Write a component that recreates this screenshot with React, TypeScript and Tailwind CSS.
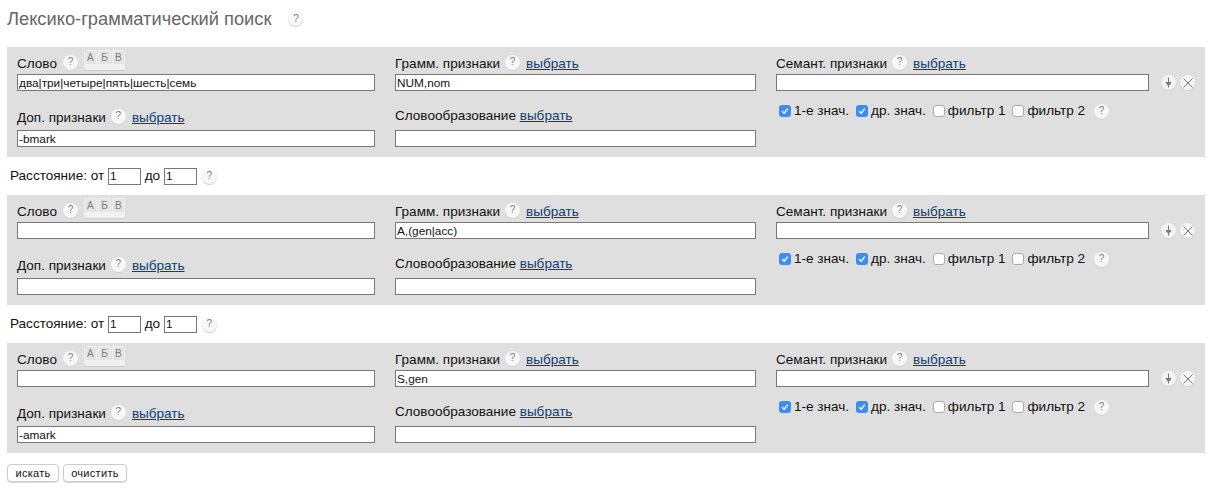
import React from 'react';

const Help = ({ className = '' }: { className?: string }) => (
  <span className={`inline-flex h-[15px] w-[15px] shrink-0 items-center justify-center rounded-full bg-[#f7f7f7] text-[10px] leading-none text-[#808080] shadow-[0_1px_1px_#d0d0d0] ${className}`}>
    ?
  </span>
);

const Pick = () => <a href="#" className="text-[#0b3f78] underline">выбрать</a>;

const Field = ({ value = '', className = '' }: { value?: string; className?: string }) => (
  <input
    readOnly
    value={value}
    className={`block h-[17px] border border-[#777] bg-white px-[1px] text-[11.8px] leading-none text-[#111] outline-none ${className}`}
  />
);

const Abc = () => (
  <span className="ml-[6px] flex h-[20px] w-[41px] -translate-y-[4px] flex-col items-stretch">
    <span className="flex h-[14px] gap-[1px]">
      {['А', 'Б', 'В'].map(l => (
        <span key={l} className="flex h-[14px] w-[13px] items-center justify-center rounded-t-[2px] border-x border-t border-[#f0f0f0] bg-[#e4e4e4] text-[10px] leading-none text-[#7d7d7d]">
          {l}
        </span>
      ))}
    </span>
    <span className="h-[6px] rounded-[2px] bg-[#f1f1f1] shadow-[0_1px_0_#cfcfcf]" />
  </span>
);

const Check = ({ on, label, className = '' }: { on?: boolean; label: string; className?: string }) => (
  <span className={`flex items-center ${className}`}>
    {on ? (
      <span className="mr-[3px] flex h-[12px] w-[12px] items-center justify-center rounded-[3px] bg-[#3b8df0]">
        <svg width="8" height="8" viewBox="0 0 8 8" fill="none" stroke="white" strokeWidth="1.5">
          <path d="M1.2 4.2 3.2 6.2 6.8 1.6" />
        </svg>
      </span>
    ) : (
      <span className="mr-[3px] h-[12px] w-[12px] rounded-[3px] border border-[#aaa] bg-white" />
    )}
    {label}
  </span>
);

const RoundBtn = ({ children }: { children: React.ReactNode }) => (
  <span className="flex h-[15px] w-[15px] items-center justify-center rounded-full bg-[#f3f3f3] shadow-[0_1px_1px_#d0d0d0]">
    {children}
  </span>
);

const Panel = ({ word = '', gram = '', extra = '' }: { word?: string; gram?: string; extra?: string }) => (
  <div className="mx-[7px] flex h-[110px] w-[1198px] bg-[#dfdfdf] pl-[10px] pt-[7px] text-[13.55px] text-[#111]">
    <div className="w-[358px]">
      <div className="flex h-[20px] items-center">
        <span>Слово</span>
        <Help className="ml-[6px] -translate-y-[2px]" />
        <Abc />
      </div>
      <Field value={word} className="w-[358px]" />
      <div className="mt-[17px] flex h-[20px] items-center">
        <span>Доп. признаки</span>
        <Help className="ml-[5px] -translate-y-[2px]" />
        <span className="ml-[6px]"><Pick /></span>
      </div>
      <Field value={extra} className="mt-[2px] w-[358px]" />
    </div>
    <div className="ml-[20px] w-[361px]">
      <div className="flex h-[20px] items-center">
        <span>Грамм. признаки</span>
        <Help className="ml-[5px] -translate-y-[2px]" />
        <span className="ml-[6px]"><Pick /></span>
      </div>
      <Field value={gram} className="w-[361px]" />
      <div className="mt-[16px] flex h-[19px] items-center">
        <span>Словообразование&nbsp;</span>
        <Pick />
      </div>
      <Field className="mt-[4px] w-[361px]" />
    </div>
    <div className="ml-[20px] w-[420px]">
      <div className="flex h-[20px] items-center">
        <span>Семант. признаки</span>
        <Help className="ml-[5px] -translate-y-[2px]" />
        <span className="ml-[6px]"><Pick /></span>
      </div>
      <div className="flex items-center">
        <Field className="w-[373px]" />
        <span className="ml-[12px] flex gap-[4px]">
          <RoundBtn>
            <svg width="9" height="11" viewBox="0 0 9 11" fill="none" stroke="#777" strokeWidth="1">
              <path d="M4.5 0.5V10.5" />
              <path d="M2 5.5H7L4.5 8.5Z" fill="#777" />
            </svg>
          </RoundBtn>
          <RoundBtn>
            <svg width="10" height="10" viewBox="0 0 10 10" fill="none" stroke="#777" strokeWidth="1">
              <path d="M0.5 0.5 9.5 9.5M9.5 0.5 0.5 9.5" />
            </svg>
          </RoundBtn>
        </span>
      </div>
      <div className="mt-[12px] flex h-[16px] items-center pl-[3px]">
        <Check on label="1-е знач." />
        <Check on label="др. знач." className="ml-[7px]" />
        <Check label="фильтр 1" className="ml-[7px]" />
        <Check label="фильтр 2" className="ml-[7px]" />
        <Help className="ml-[9px]" />
      </div>
    </div>
  </div>
);

const Distance = () => (
  <div className="flex h-[38px] items-center pl-[10px] text-[13.55px] text-[#111]">
    <span>Расстояние: от&nbsp;</span>
    <Field value="1" className="w-[33px]" />
    <span>&nbsp;до&nbsp;</span>
    <Field value="1" className="w-[33px]" />
    <Help className="ml-[5px]" />
  </div>
);

export default function App() {
  return (
    <div className="h-[492px] w-[1216px] overflow-hidden bg-white font-['Liberation_Sans',sans-serif]">
      <div className="flex h-[47px] items-start pl-[7px] pt-[9px]">
        <h1 className="text-[18.3px] leading-[20px] font-normal text-[#666]">Лексико-грамматический поиск</h1>
        <Help className="ml-[17px] mt-[2px]" />
      </div>
      <Panel word="два|три|четыре|пять|шесть|семь" gram="NUM,nom" extra="-bmark" />
      <Distance />
      <Panel gram="A,(gen|acc)" />
      <Distance />
      <Panel gram="S,gen" extra="-amark" />
      <div className="mt-[11px] flex gap-[4px] pl-[7px]">
        <button className="h-[18px] rounded-[4px] border border-[#ccc] bg-white px-[7.5px] text-[11px] leading-none tracking-[0.3px] text-[#111] shadow-[0_1px_1px_#ddd]">искать</button>
        <button className="h-[18px] rounded-[4px] border border-[#ccc] bg-white px-[7px] text-[11px] leading-none tracking-[0.3px] text-[#111] shadow-[0_1px_1px_#ddd]">очистить</button>
      </div>
    </div>
  );
}
